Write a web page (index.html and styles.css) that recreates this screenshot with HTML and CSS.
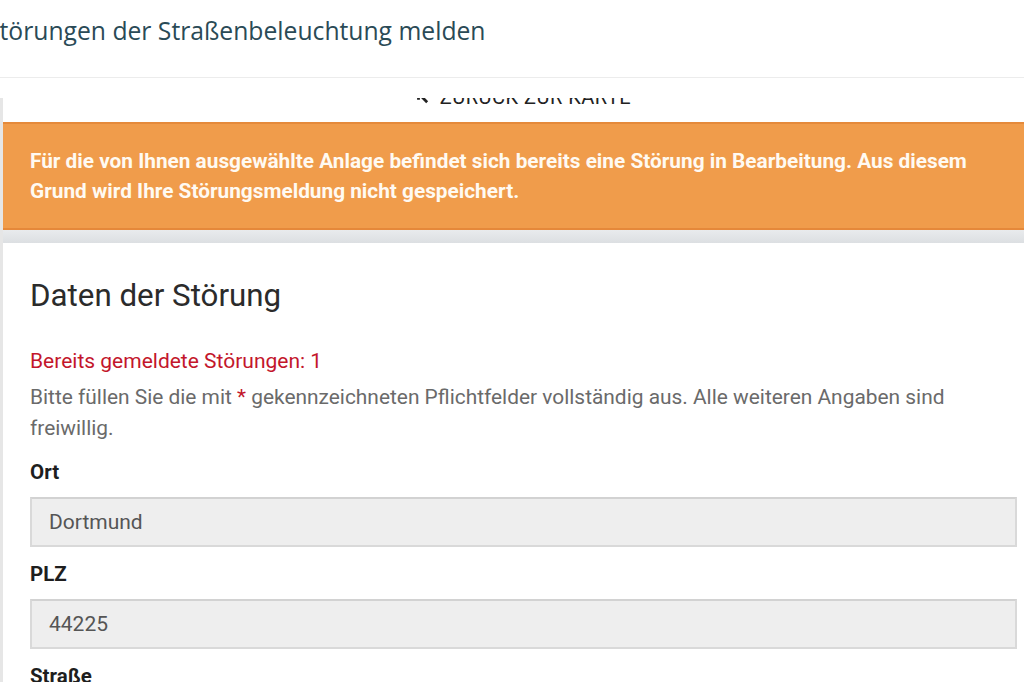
FILE: index.html
```html
<!DOCTYPE html>
<html lang="de">
<head>
<meta charset="utf-8">
<title>Störungen der Straßenbeleuchtung melden</title>
<link rel="stylesheet" href="styles.css">
</head>
<body>
<header class="site-header">
  <h1 class="site-title">Störungen der Straßenbeleuchtung melden</h1>
</header>
<div class="header-gap"></div>
<main class="scroller">
  <div class="back-row">
    <a class="back-link" href="#">
      <svg class="back-icon" viewBox="0 0 12 12" width="13" height="13"><path d="M1 1H8V3.6H5.4L11.2 9.4 9.4 11.2 3.6 5.4V8H1z" fill="#222"/></svg>
      <span>ZURÜCK ZUR KARTE</span>
    </a>
  </div>
  <div class="alert">
    Für die von Ihnen ausgewählte Anlage befindet sich bereits eine Störung in Bearbeitung. Aus diesem Grund wird Ihre Störungsmeldung nicht gespeichert.
  </div>
  <div class="alert-shadow"></div>
  <section class="card">
    <h2 class="card-title">Daten der Störung</h2>
    <p class="reported">Bereits gemeldete Störungen: 1</p>
    <p class="hint">Bitte füllen Sie die mit <span class="req">*</span> gekennzeichneten Pflichtfelder vollständig aus. Alle weiteren Angaben sind freiwillig.</p>
    <div class="field">
      <label class="label">Ort</label>
      <div class="input">Dortmund</div>
    </div>
    <div class="field">
      <label class="label">PLZ</label>
      <div class="input">44225</div>
    </div>
    <div class="field">
      <label class="label">Straße</label>
      <div class="input"></div>
    </div>
  </section>
</main>
</body>
</html>
```
FILE: styles.css
```css
html, body {
  margin: 0;
  padding: 0;
  background: #ffffff;
  overflow: hidden;
}
body {
  width: 1024px;
  height: 682px;
  font-family: Roboto, "Liberation Sans", sans-serif;
}
.site-header {
  height: 77px;
  border-bottom: 1px solid #ececec;
  display: flex;
  align-items: center;
  overflow: hidden;
}
.site-title {
  margin: 0 0 16px -14px;
  font-family: "Open Sans", sans-serif;
  font-weight: 400;
  font-size: 24.7px;
  color: #2a4a56;
  white-space: nowrap;
}
.header-gap {
  height: 20px;
}
.scroller {
  border-left: 3px solid #e6e6e6;
}
.back-row {
  height: 24px;
  overflow: hidden;
  display: flex;
  justify-content: center;
  align-items: flex-start;
}
.back-link {
  margin-top: -11px;
  margin-left: 20px;
  display: flex;
  align-items: center;
  gap: 11px;
  color: #222;
  text-decoration: none;
  font-size: 20px;
  line-height: 20px;
  letter-spacing: 0.5px;
}
.back-icon {
  flex: none;
}
.alert {
  background: #f09c4b;
  border-top: 2px solid #e58a3b;
  border-bottom: 2px solid #e5883a;
  color: #fffaf2;
  font-weight: 700;
  font-size: 20.8px;
  line-height: 30px;
  padding: 22px 40px 22px 27px;
}
.alert-shadow {
  height: 13px;
  background: linear-gradient(#e9ebed, #dcdfe2);
}
.card {
  padding: 33px 7px 0 27px;
}
.card-title {
  margin: 0;
  font-size: 31.3px;
  font-weight: 400;
  color: #2b2b2b;
  line-height: 40px;
}
.reported {
  margin: 30px 0 0;
  font-size: 21px;
  line-height: 31px;
  color: #c3162b;
}
.hint {
  margin: 5px 0 0;
  font-size: 20.9px;
  line-height: 31px;
  color: #6a6a6a;
}
.req {
  color: #c3162b;
}
.field {
  display: flex;
  flex-direction: column;
}
.label {
  margin-top: 15px;
  font-weight: 700;
  font-size: 20.5px;
  line-height: 26px;
  color: #1e1e1e;
}
.field + .field .label {
  margin-top: 14px;
}
.input {
  margin-top: 12px;
  height: 46px;
  box-sizing: content-box;
  background: #eeeeee;
  border: 2px solid #d9d9d9;
  border-top-color: #d2d2d2;
  padding: 0 17px;
  display: flex;
  align-items: center;
  font-size: 21px;
  color: #555;
}
```
